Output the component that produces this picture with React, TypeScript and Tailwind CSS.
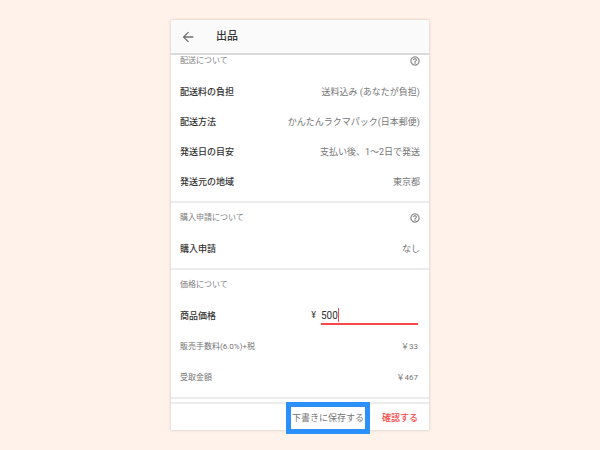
import React from "react";

interface RowProps {
  label: string;
  value: string;
}

const shippingRows: RowProps[] = [
  { label: "配送料の負担", value: "送料込み (あなたが負担)" },
  { label: "配送方法", value: "かんたんラクマパック(日本郵便)" },
  { label: "発送日の目安", value: "支払い後、1〜2日で発送" },
  { label: "発送元の地域", value: "東京都" },
];

const feeRows: RowProps[] = [
  { label: "販売手数料(6.0%)+税", value: "￥33" },
  { label: "受取金額", value: "￥467" },
];

const HelpIcon = () => (
  <svg className="h-[10px] w-[10px]" viewBox="1 1 22 22" fill="#808080" stroke="#808080" strokeWidth="0.5" aria-hidden="true">
    <path d="M11 18h2v-2h-2v2zm1-16C6.48 2 2 6.48 2 12s4.48 10 10 10 10-4.48 10-10S17.52 2 12 2zm0 18c-4.41 0-8-3.59-8-8s3.59-8 8-8 8 3.59 8 8-3.59 8-8 8zm0-14c-2.21 0-4 1.79-4 4h2c0-1.1.9-2 2-2s2 .9 2 2c0 2-3 1.75-3 5h2c0-2.25 3-2.5 3-5 0-2.21-1.79-4-4-4z" />
  </svg>
);

const SectionTitle = ({ title, help }: { title: string; help?: boolean }) => (
  <div className="mb-[9px] flex h-3 items-center justify-between">
    <h2 className="text-[8px] leading-3 text-[#808080]">{title}</h2>
    {help && (
      <button type="button" aria-label={`${title}のヘルプ`}>
        <HelpIcon />
      </button>
    )}
  </div>
);

const Row = ({ label, value }: RowProps) => (
  <div className="flex h-[30px] items-center justify-between pt-[2px] text-[9px] leading-3">
    <dt className="font-medium text-[#333333]">{label}</dt>
    <dd className="text-[#757575]">{value}</dd>
  </div>
);

const App: React.FC = () => {
  return (
    <div className="flex min-h-screen items-start justify-center bg-[#fff2ea] pt-5 font-[Roboto,'Noto_Sans_CJK_JP',sans-serif]">
      <div className="w-full max-w-[258px] bg-white shadow-[0_0_3px_rgba(0,0,0,0.2)]">
        {/* Header */}
        <header className="flex h-[35px] items-center gap-[20px] border-b-2 border-[#d9dbdb] bg-[#fafafa] px-[9px]">
          <button type="button" aria-label="戻る">
            <svg className="block h-[16px] w-[16px]" viewBox="0 0 24 24" fill="#707070" aria-hidden="true">
              <path d="M20 11H7.83l5.59-5.59L12 4l-8 8 8 8 1.41-1.41L7.83 13H20v-2z" />
            </svg>
          </button>
          <h1 className="text-[11px] leading-4 font-medium text-[#333333]">出品</h1>
        </header>

        <main>
          <section className="border-b-2 border-[#ececec] px-[9px] pb-[5px]">
            <SectionTitle title="配送について" help />
            <dl>
              {shippingRows.map((row) => (
                <Row key={row.label} label={row.label} value={row.value} />
              ))}
            </dl>
          </section>

          <section className="border-b-2 border-[#ececec] px-[9px] pt-[9px] pb-[5px]">
            <SectionTitle title="購入申請について" help />
            <dl>
              <Row label="購入申請" value="なし" />
            </dl>
          </section>

          <section className="border-b-2 border-[#ececec] px-[9px] pt-[9px] pb-[5px]">
            <SectionTitle title="価格について" />
            <div className="flex h-[30px] items-center justify-between pt-[2px] pr-[2px]">
              <label htmlFor="price" className="text-[9px] leading-3 font-medium text-[#333333]">
                商品価格
              </label>
              <div className="flex items-center gap-[5px] text-[10px] text-[#333333]">
                <span className="text-[9px]">¥</span>
                <div className="relative">
                  <input
                    id="price"
                    type="text"
                    inputMode="numeric"
                    defaultValue="500"
                    className="block h-[17px] w-[97px] border-b-2 border-[#fa4848] bg-transparent outline-none"
                  />
                  <span className="absolute top-0 left-[17px] h-[14px] w-px bg-[#fa4848]" />
                </div>
              </div>
            </div>
            <dl>
              {feeRows.map((row) => (
                <div
                  key={row.label}
                  className="flex h-[31px] items-center justify-between pt-[2px] pr-[2px] text-[8px] leading-3 text-[#757575]"
                >
                  <dt>{row.label}</dt>
                  <dd>{row.value}</dd>
                </div>
              ))}
            </dl>
          </section>
        </main>

        {/* Footer actions */}
        <footer className="mt-[3px] flex h-7 items-center justify-end gap-[17px] border-t-2 border-[#ececec] pt-px pr-[11px] text-[9px] leading-3">
          <button type="button" className="h-[22px] px-px text-[#757575] ring-[5px] ring-[#2b90fc]">
            下書きに保存する
          </button>
          <button type="button" className="font-medium text-[#fa4848]">
            確認する
          </button>
        </footer>
      </div>
    </div>
  );
};

export default App;
